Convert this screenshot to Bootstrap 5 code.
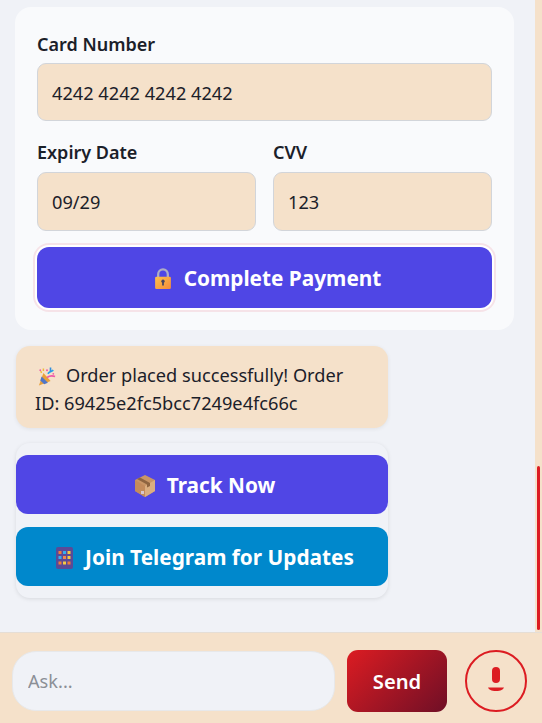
<!doctype html>
<html lang="en"><head><meta charset="utf-8"><title>Checkout</title>
<link href="https://cdn.jsdelivr.net/npm/bootstrap@5.3.0/dist/css/bootstrap.min.css" rel="stylesheet">
<style>
html,body{height:100%;overflow:hidden}
body{font-family:"Noto Sans","Open Sans",sans-serif;background:#f5e1ca;color:#1b2029;font-size:18.2px}
.app-shell{height:723px}
.chat-col{background:#f0f2f7;height:632px;padding:7px 21px 0 15px;width:535px;overflow:hidden}
.scroll-track{width:7px;height:632px;padding:466px 2px 2px 2px}
.scroll-thumb{height:164px;width:3px;background:#dc1c22;border-radius:2px}
.pay-card{background:#f9fafc;border-radius:16px;height:323px;padding:26px 22px 0;border:0;width:499px}
.lbl{font-weight:600;font-size:18px;line-height:22px;margin-bottom:8px;display:block;color:#1b2029}
.fld.form-control{background:#f5e1ca;border:1px solid #d2d5da;border-radius:9px;height:58px;padding:2px 14px 0;font-size:18.2px;color:#1b2029;box-shadow:none}
.fld-sm.form-control{height:59px;padding-top:0}
.fields-row{--bs-gutter-x:17px;margin-top:20px}
.fields-row .lbl{margin-bottom:9px}
.act-btn.btn{color:#fff;font-weight:700;font-size:20.8px;border:0;border-radius:12px;height:59px;width:100%;display:flex;align-items:center;justify-content:center;gap:12px;padding:2px 0 0 6px}
.act-btn.btn:hover{color:#fff}
.pay-btn.btn{background:#4f46e5;height:61px;margin-top:16px;box-shadow:0 0 0 2px #fff,0 0 0 4px #f6e3e8}
.track-btn.btn{background:#5046e5}
.tg-btn.btn{background:#0088cc;margin-top:13px}
.note-bubble{background:#f5e1ca;width:372px;height:82px;border-radius:14px;margin:16px 0 0 1px;padding:16px 19px 0;line-height:27.5px;box-shadow:0 1px 4px rgba(0,0,0,.07);font-size:18.2px}
.note-bubble svg{vertical-align:-4px;margin:0 10px 0 3px}
.btn-wrap{width:372px;height:155px;margin:15px 0 0 1px;border-radius:14px;padding-top:12px;box-shadow:0 1px 4px rgba(0,0,0,.1);background:#f0f2f7}
.foot-bar{height:91px;border-top:1px solid #e5ded6;padding:17px 15px 0 12px;gap:12px}
.ask-input.form-control{width:323px;height:60px;margin-top:1px;border-radius:24px;background:#f0f2f7;border:1px solid #e7e8ea;padding:0 15px;font-size:18.2px;box-shadow:none}
.ask-input::placeholder{color:#8b8f96}
.send-btn.btn{width:100px;height:62px;border-radius:11px;border:0;background:linear-gradient(135deg,#dc1c22,#6f0f26);color:#fff;font-weight:600;font-size:20.2px;padding:0}
.mic-btn.btn{width:62px;height:62px;border-radius:50%;border:2px solid #dc1c22;background:transparent;padding:0;margin-left:6px;display:flex;align-items:center;justify-content:center}
.mic-btn svg{margin-bottom:4px}
</style></head>
<body>
<div class="app-shell d-flex flex-column">
<div class="d-flex">
<main class="chat-col">
<form class="card pay-card">
<label class="lbl" for="num">Card Number</label>
<input id="num" class="form-control fld" value="4242 4242 4242 4242">
<div class="row fields-row">
<div class="col-6"><label class="lbl" for="exp">Expiry Date</label><input id="exp" class="form-control fld fld-sm" value="09/29"></div>
<div class="col-6"><label class="lbl" for="cvv">CVV</label><input id="cvv" class="form-control fld fld-sm" value="123"></div>
</div>
<button type="button" class="btn act-btn pay-btn">
<svg width="18" height="21" viewBox="0 0 20 24"><defs><linearGradient id="lk" x1="0" y1="0" x2="1" y2="1"><stop offset="0" stop-color="#fdc14a"/><stop offset="1" stop-color="#f58a3c"/></linearGradient></defs><path d="M4.5 11V7a5.500 5.500 0 0 1 11 0v4" fill="none" stroke="#aeadc4" stroke-width="2.600"/><rect x="1" y="10" width="18" height="14" rx="1.500" fill="url(#lk)"/><circle cx="10" cy="15" r="1.900" fill="#4b4560"/><rect x="9" y="15" width="2" height="5" fill="#4b4560"/></svg>
<span>Complete Payment</span></button>
</form>
<div class="note-bubble"><svg width="18" height="19" viewBox="0 0 20 20"><path d="M6 6 L14 15 L1 20 Z" fill="#e9a13b"/><path d="M4 10l7 7-4 1.500-4.500-4z" fill="#4f76c9"/><path d="M11 7c2-3 4-2 6-4" fill="none" stroke="#25a4e8" stroke-width="2"/><path d="M10 11c3-2 6-2 9-1" fill="none" stroke="#ee5aa8" stroke-width="2"/><path d="M6 1v3M3 4l1 2" stroke="#f0b93a" stroke-width="1.600"/><circle cx="2.500" cy="3" r="1" fill="#ee5aa8"/><circle cx="17" cy="7" r="1" fill="#ee5aa8"/><circle cx="10" cy="3" r="1.100" fill="#ee5aa8"/><rect x="13" y="0" width="1.800" height="5" fill="#2f8fe0"/></svg>Order placed successfully! Order ID: 69425e2fc5bcc7249e4fc66c</div>
<div class="btn-wrap">
<button type="button" class="btn act-btn track-btn"><svg width="20" height="22" viewBox="0 0 20 22"><path d="M10 0l10 5v11l-10 6-10-6V5z" fill="#c99566"/><path d="M10 11l10-6v11l-10 6z" fill="#dcae80"/><path d="M0 5l10 6v11L0 16z" fill="#c48b5c"/><path d="M5 2.500l10 5.500v3l-3 1.500V9.500L2 4z" fill="#8f6440"/><rect x="6" y="16" width="3" height="3" fill="#d8c6cf"/></svg><span>Track Now</span></button>
<button type="button" class="btn act-btn tg-btn"><svg width="17" height="22" viewBox="0 0 17 22"><rect width="17" height="22" rx="2" fill="#5b4a96"/><g fill="#f27b3a"><rect x="2.500" y="4" width="3" height="3"/><rect x="2.500" y="14.500" width="3" height="3"/></g><g fill="#f5c842"><rect x="11.500" y="4" width="3" height="3"/><rect x="11.500" y="9" width="3" height="3"/><rect x="7" y="14.500" width="3" height="3"/></g><g fill="#35aef0"><rect x="7" y="4" width="3" height="3"/><rect x="2.500" y="9" width="3" height="3"/></g><rect x="7" y="9" width="3" height="3" fill="#f2884a"/><rect x="11.500" y="14.500" width="3" height="3" fill="#f27b3a"/></svg><span>Join Telegram for Updates</span></button>
</div>
</main>
<div class="scroll-track"><div class="scroll-thumb"></div></div>
</div>
<footer class="foot-bar d-flex align-items-start">
<input class="form-control ask-input" placeholder="Ask...">
<button type="button" class="btn send-btn">Send</button>
<button type="button" class="btn mic-btn" aria-label="Voice"><svg width="16" height="24" viewBox="0 0 16 24"><rect x="4" y="0" width="8" height="16" rx="4" fill="#dc1c22"/><path d="M0 20.500h16c-1 2-3 3.500-8 3.500S1 22.500 0 20.500z" fill="#dc1c22"/></svg></button>
</footer>
</div>
<script src="https://cdn.jsdelivr.net/npm/bootstrap@5.3.0/dist/js/bootstrap.bundle.min.js"></script>
</body></html>
